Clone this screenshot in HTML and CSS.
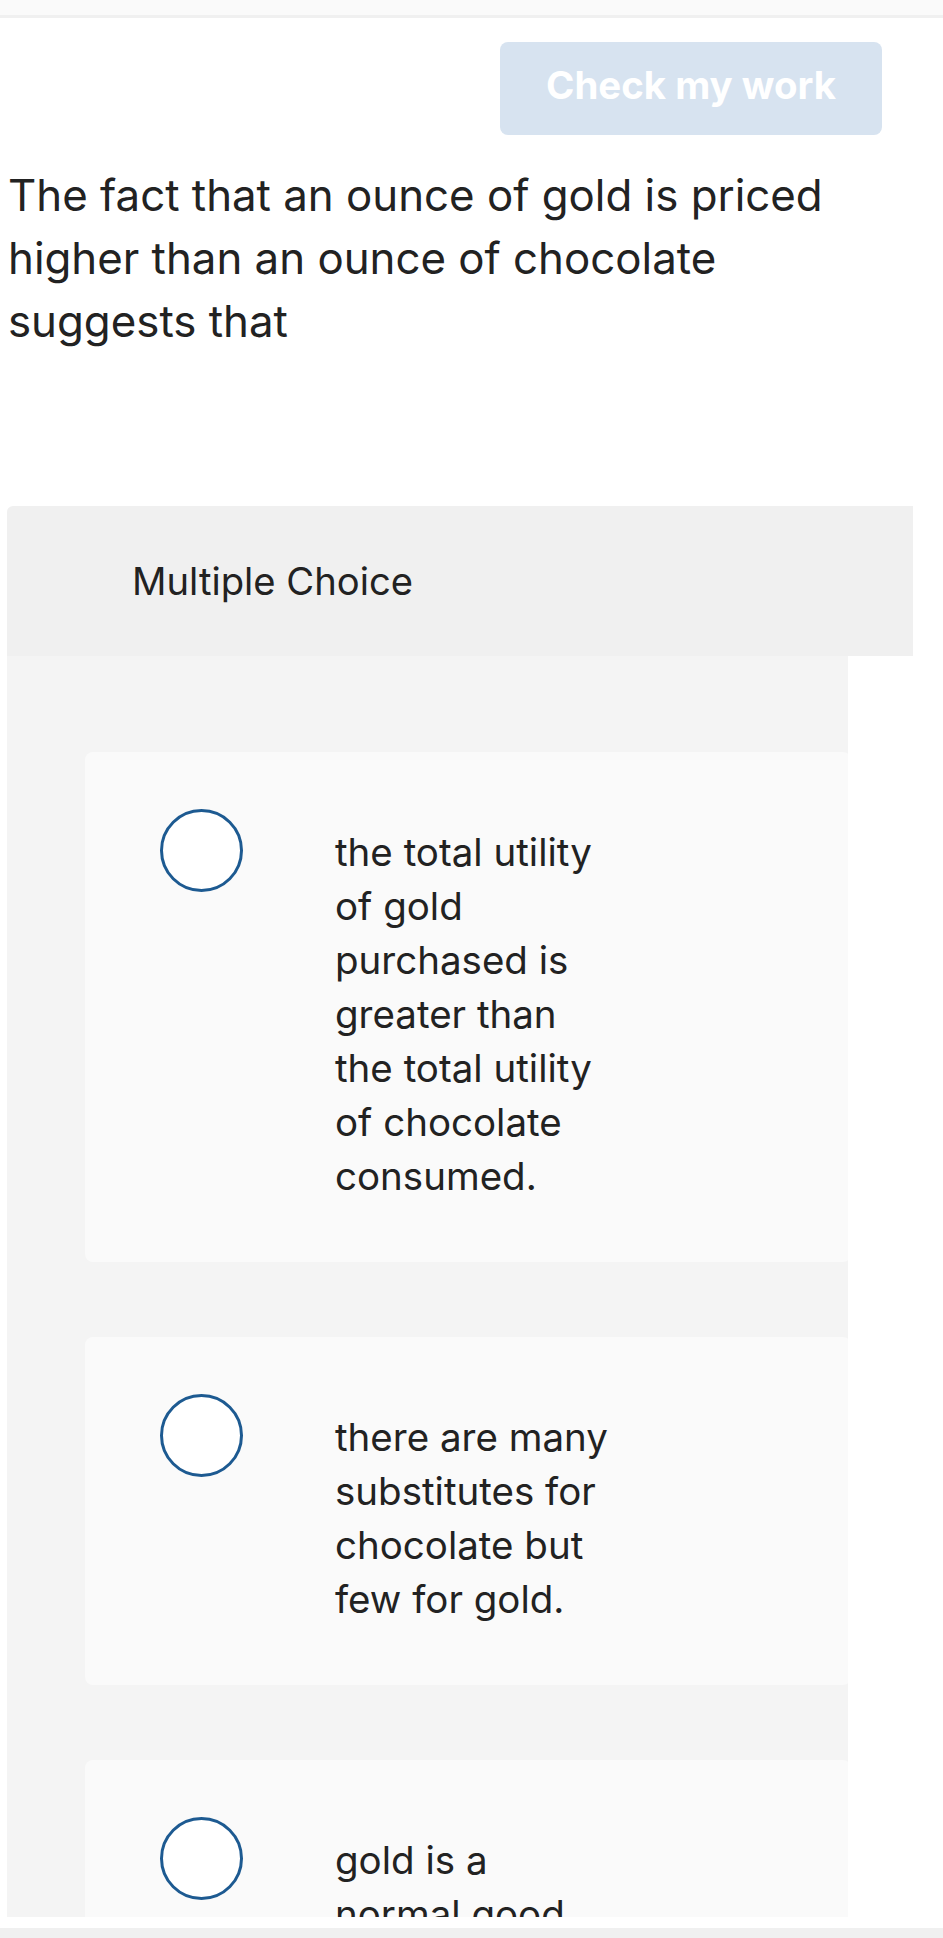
FILE: index.html
```html
<!DOCTYPE html>
<html lang="en">
<head>
<meta charset="utf-8">
<title>Multiple Choice</title>
<link rel="stylesheet" href="styles.css">
</head>
<body>
<div class="topbar"></div>
<div class="actions">
  <button class="check-btn" type="button">Check my work</button>
</div>
<p class="question">The fact that an ounce of gold is priced higher than an ounce of chocolate suggests that</p>
<div class="mc-header">Multiple Choice</div>
<div class="choices">
  <div class="choice">
    <span class="radio"></span>
    <div class="choice-text">the total utility<br>of gold<br>purchased is<br>greater than<br>the total utility<br>of chocolate<br>consumed.</div>
  </div>
  <div class="choice">
    <span class="radio"></span>
    <div class="choice-text">there are many<br>substitutes for<br>chocolate but<br>few for gold.</div>
  </div>
  <div class="choice">
    <span class="radio"></span>
    <div class="choice-text">gold is a<br>normal good<br>and chocolate<br>is not.</div>
  </div>
</div>
<div class="bottom-gap"></div>
<div class="bottombar"></div>
</body>
</html>
```
FILE: styles.css
```css
html, body {
  margin: 0;
  padding: 0;
  background: #ffffff;
}
body {
  font-family: "Inter", "Open Sans", sans-serif;
  color: #222222;
  width: 943px;
  height: 1938px;
  overflow: hidden;
}
.topbar {
  height: 15px;
  background: #fafafa;
  border-bottom: 3px solid #f0f0f0;
}
.actions {
  display: flex;
  justify-content: flex-end;
  padding: 24px 61px 0 0;
}
.check-btn {
  width: 382px;
  height: 93px;
  border: none;
  border-radius: 8px;
  background: #d7e3f0;
  color: #ffffff;
  font-family: "Inter", sans-serif;
  font-weight: 700;
  font-size: 38.4px;
  padding: 0 0 7px 0;
}
.question {
  margin: 29px 0 0 0;
  padding: 0 50px 0 8px;
  font-size: 43.8px;
  line-height: 63px;
  height: 189px;
}
.mc-header {
  margin: 153px 30px 0 7px;
  height: 150px;
  display: flex;
  align-items: center;
  padding-left: 125px;
  background: #f0f0f0;
  border-radius: 6px 0 0 0;
  font-size: 38.2px;
}
.choices {
  margin-left: 7px;
  width: 841px;
  height: 1261px;
  background: #f4f4f4;
  padding-top: 96px;
  box-sizing: border-box;
  overflow: hidden;
  display: flex;
  flex-direction: column;
  gap: 75px;
}
.choice {
  flex: none;
  margin-left: 78px;
  width: 766px;
  background: #fafafa;
  border-radius: 8px;
  display: flex;
  align-items: flex-start;
  padding: 0 0 59px 75px;
  box-sizing: border-box;
}
.radio {
  flex: none;
  width: 83px;
  height: 83px;
  margin-top: 57px;
  box-sizing: border-box;
  border: 3px solid #1d5a91;
  border-radius: 50%;
  background: #ffffff;
}
.choice-text {
  margin: 73px 0 0 92px;
  font-size: 38.5px;
  line-height: 54px;
}
.bottom-gap {
  height: 11px;
}
.bottombar {
  height: 10px;
  background: #f0f0f0;
}
```
